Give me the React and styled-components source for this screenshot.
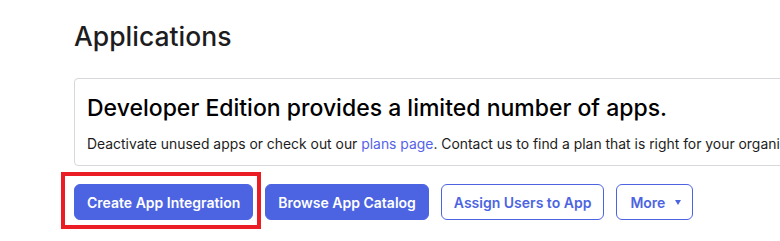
import React from 'react';
import styled, { createGlobalStyle } from 'styled-components';

const Global = createGlobalStyle`
  html {
    overflow: hidden;
  }
  body {
    margin: 0;
    padding: 0;
    background: #fff;
    font-family: Inter, "Noto Sans", sans-serif;
    -webkit-font-smoothing: antialiased;
  }
`;

const Page = styled.div`
  width: 900px;
  padding: 20px 0 20px 74px;
  box-sizing: border-box;
`;

const Title = styled.h1`
  margin: 0;
  font-size: 26.5px;
  line-height: 32px;
  font-weight: 500;
  color: #1d1d21;
`;

const Notice = styled.div`
  margin-top: 26px;
  border: 1px solid #d7d7dc;
  border-radius: 4px;
  padding: 15px 12px 11px;
  white-space: nowrap;
`;

const NoticeTitle = styled.h2`
  margin: 0;
  font-size: 23px;
  line-height: 28px;
  font-weight: 500;
  color: #000;
`;

const NoticeText = styled.p`
  margin: 12px 0 0;
  font-size: 13.9px;
  line-height: 20px;
  color: #1d1d21;

  a {
    color: #5563e8;
    text-decoration: none;
  }
`;

const Actions = styled.div`
  display: flex;
  gap: 12px;
  margin-top: 18px;
`;

const Highlight = styled.div`
  position: relative;
  display: flex;

  &::after {
    content: '';
    position: absolute;
    left: -13px;
    top: -12px;
    right: -8px;
    bottom: -9px;
    border: 4px solid #ec1c24;
    pointer-events: none;
  }
`;

const Button = styled.button`
  display: inline-flex;
  align-items: center;
  gap: 10px;
  height: 36px;
  padding: 0 ${p => (p.$menu ? '11px' : '12px')} 0 ${p => (p.$menu ? '13px' : '12px')};
  border-radius: 6px;
  border: 1px solid #4c64e1;
  background: ${p => (p.$outline ? '#fff' : '#4c64e1')};
  color: ${p => (p.$outline ? '#4c64e1' : '#fff')};
  font-family: Inter, "Noto Sans", sans-serif;
  font-size: 14px;
  font-weight: 600;
  cursor: pointer;
`;

const Caret = styled.span`
  width: 0;
  height: 0;
  border-left: 3.5px solid transparent;
  border-right: 3.5px solid transparent;
  border-top: 5px solid currentColor;
`;

export default function App() {
  return (
    <>
      <Global />
      <Page>
        <Title>Applications</Title>
        <Notice>
          <NoticeTitle>Developer Edition provides a limited number of apps.</NoticeTitle>
          <NoticeText>
            Deactivate unused apps or check out our <a href="#">plans page</a>. Contact us to find a plan that is right for your organization.
          </NoticeText>
        </Notice>
        <Actions>
          <Highlight>
            <Button>Create App Integration</Button>
          </Highlight>
          <Button>Browse App Catalog</Button>
          <Button $outline>Assign Users to App</Button>
          <Button $outline $menu>
            More <Caret />
          </Button>
        </Actions>
      </Page>
    </>
  );
}
